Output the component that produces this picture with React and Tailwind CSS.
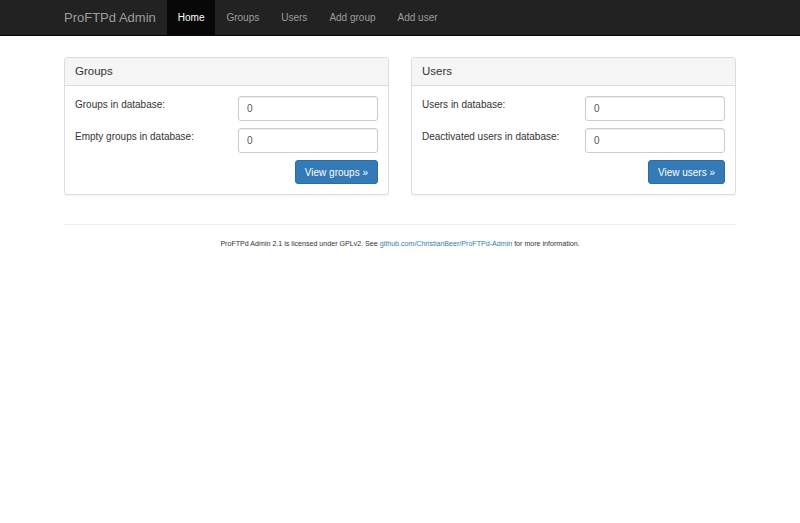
const navItems = ['Groups', 'Users', 'Add group', 'Add user'];

const Panel = ({ title, rows, button }) => (
	<div className="flex-1 rounded-[3px] border border-[#ddd] bg-white shadow-[0_1px_1px_rgba(0,0,0,0.05)]">
		<div className="h-[28px] border-b border-[#ddd] bg-[#f5f5f5] rounded-t-[3px] px-[10px] flex items-center text-[11.5px] text-[#333]">
			{title}
		</div>
		<div className="px-[10px] pt-[10px] pb-[10px]">
			{rows.map((label) => (
				<div key={label} className="flex mb-[7px]">
					<div className="w-[163px] pt-[1px] text-[10px] text-[#333]">{label}</div>
					<div className="flex-1 h-[25px] rounded-[3px] border border-[#ccc] shadow-[inset_0_1px_1px_rgba(0,0,0,0.075)] px-[8px] flex items-center text-[10px] text-[#555]">
						0
					</div>
				</div>
			))}
			<div className="flex justify-end">
				<button className="h-[24px] px-[9px] rounded-[3px] border border-[#2e6da4] bg-[#337ab7] text-white text-[10px]">
					{button} »
				</button>
			</div>
		</div>
	</div>
);

export default function App() {
	return (
		<div className="min-h-[523px] bg-white font-['Liberation_Sans',Arial,sans-serif]">
			<nav className="h-[36px] bg-[#222] border-b border-[#080808]">
				<div className="w-[672px] mx-auto flex h-full">
					<div className="text-[13px] text-[#9d9d9d] flex items-center pr-[11px]">ProFTPd Admin</div>
					<div className="flex h-full">
						<div className="bg-[#080808] text-white text-[10px] flex items-center px-[11px]">Home</div>
						{navItems.map((item) => (
							<div key={item} className="text-[#9d9d9d] text-[10px] flex items-center px-[11px]">{item}</div>
						))}
					</div>
				</div>
			</nav>
			<main className="w-[672px] mx-auto pt-[21px]">
				<div className="flex gap-[22px]">
					<Panel title="Groups" rows={['Groups in database:', 'Empty groups in database:']} button="View groups" />
					<Panel title="Users" rows={['Users in database:', 'Deactivated users in database:']} button="View users" />
				</div>
				<hr className="mt-[29px] border-t border-[#eee]" />
				<p className="mt-[14px] text-center text-[7.1px] text-[#333]">
					ProFTPd Admin 2.1 is licensed under GPLv2. See{' '}
					<span className="text-[#337ab7]">github.com/ChristianBeer/ProFTPd-Admin</span> for more information.
				</p>
			</main>
		</div>
	);
}
